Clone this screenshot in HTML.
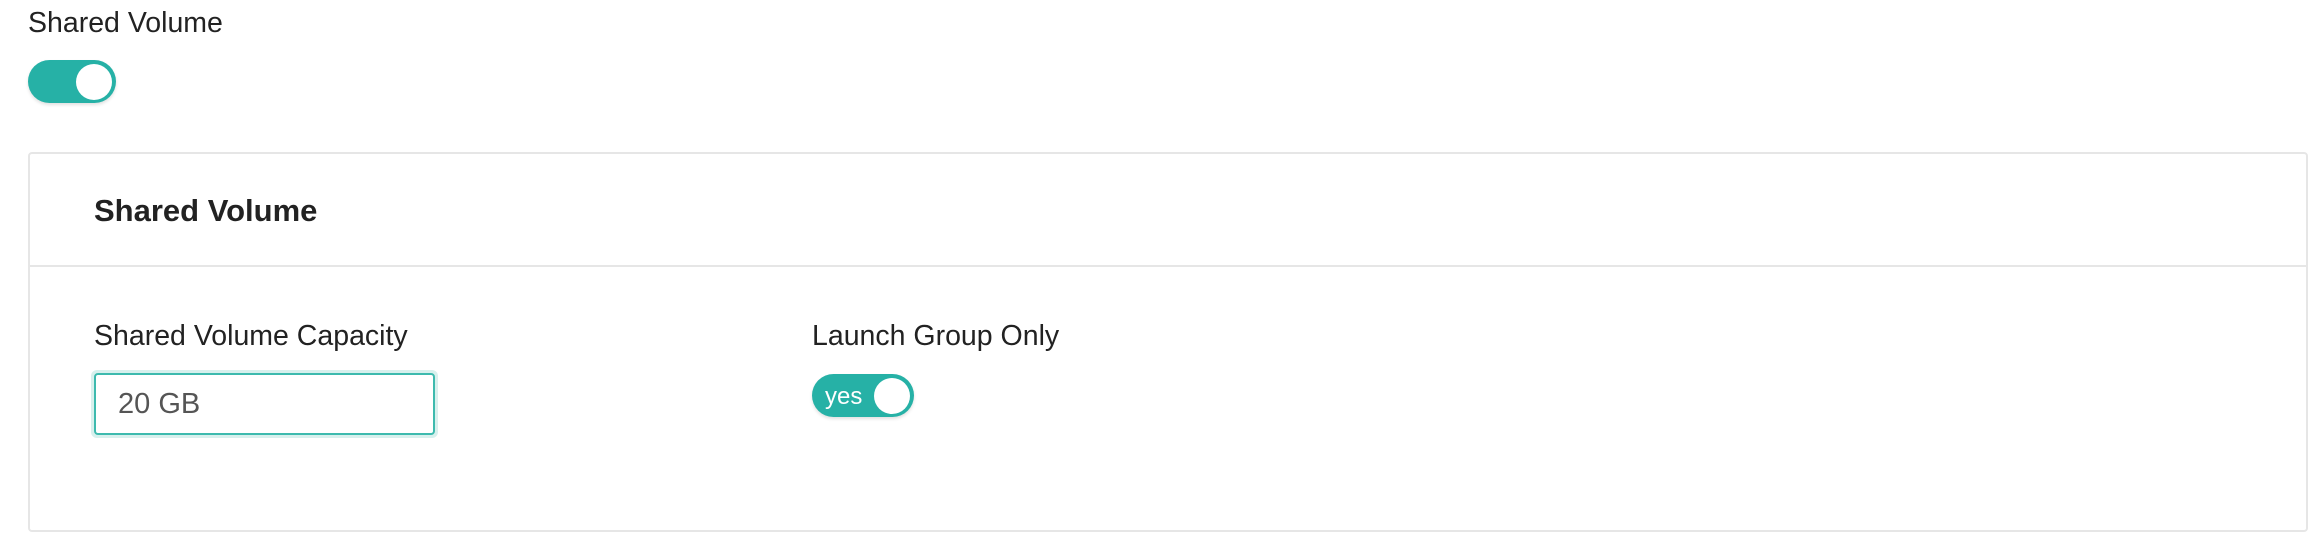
<!DOCTYPE html>
<html><head><style>
body{margin:0;width:2312px;height:542px;background:#fff;font-family:"Liberation Sans",Arial,sans-serif;color:#222;position:relative;overflow:hidden}
.abs{position:absolute}
.t{font-size:28.5px;line-height:1;white-space:nowrap}
.tog{position:absolute;background:#26b1a6;border-radius:30px;box-shadow:0 2px 3px rgba(0,0,0,.12)}
.knob{position:absolute;background:#fff;border-radius:50%}
</style></head><body>
<div class="abs t" style="left:28px;top:9px">Shared Volume</div>
<div class="tog" style="left:28px;top:60px;width:88px;height:43px">
  <div class="knob" style="left:48px;top:4px;width:36px;height:36px"></div>
</div>
<div class="abs" style="left:28px;top:152px;width:2280px;height:380px;border:2px solid #e6e6e6;border-radius:4px;box-sizing:border-box"></div>
<div class="abs" style="left:30px;top:265px;width:2278px;height:2px;background:#e6e6e6"></div>
<div class="abs t" style="left:94px;top:195px;font-size:31px;font-weight:bold;color:#222">Shared Volume</div>
<div class="abs t" style="left:94px;top:322px">Shared Volume Capacity</div>
<div class="abs" style="left:91px;top:370px;width:347px;height:68px;border-radius:6px;background:#d7f0ed"></div>
<div class="abs" style="left:94px;top:373px;width:341px;height:62px;border:2px solid #3dbaae;border-radius:4px;box-sizing:border-box;background:#fff"></div>
<div class="abs t" style="left:118px;top:390px;color:#555;font-size:29px">20 GB</div>
<div class="abs t" style="left:812px;top:322px">Launch Group Only</div>
<div class="tog" style="left:812px;top:374px;width:102px;height:43px">
  <div class="abs" style="left:13px;top:9px;color:#fff;font-size:24px">yes</div>
  <div class="knob" style="left:62px;top:4px;width:36px;height:36px"></div>
</div>
</body></html>
